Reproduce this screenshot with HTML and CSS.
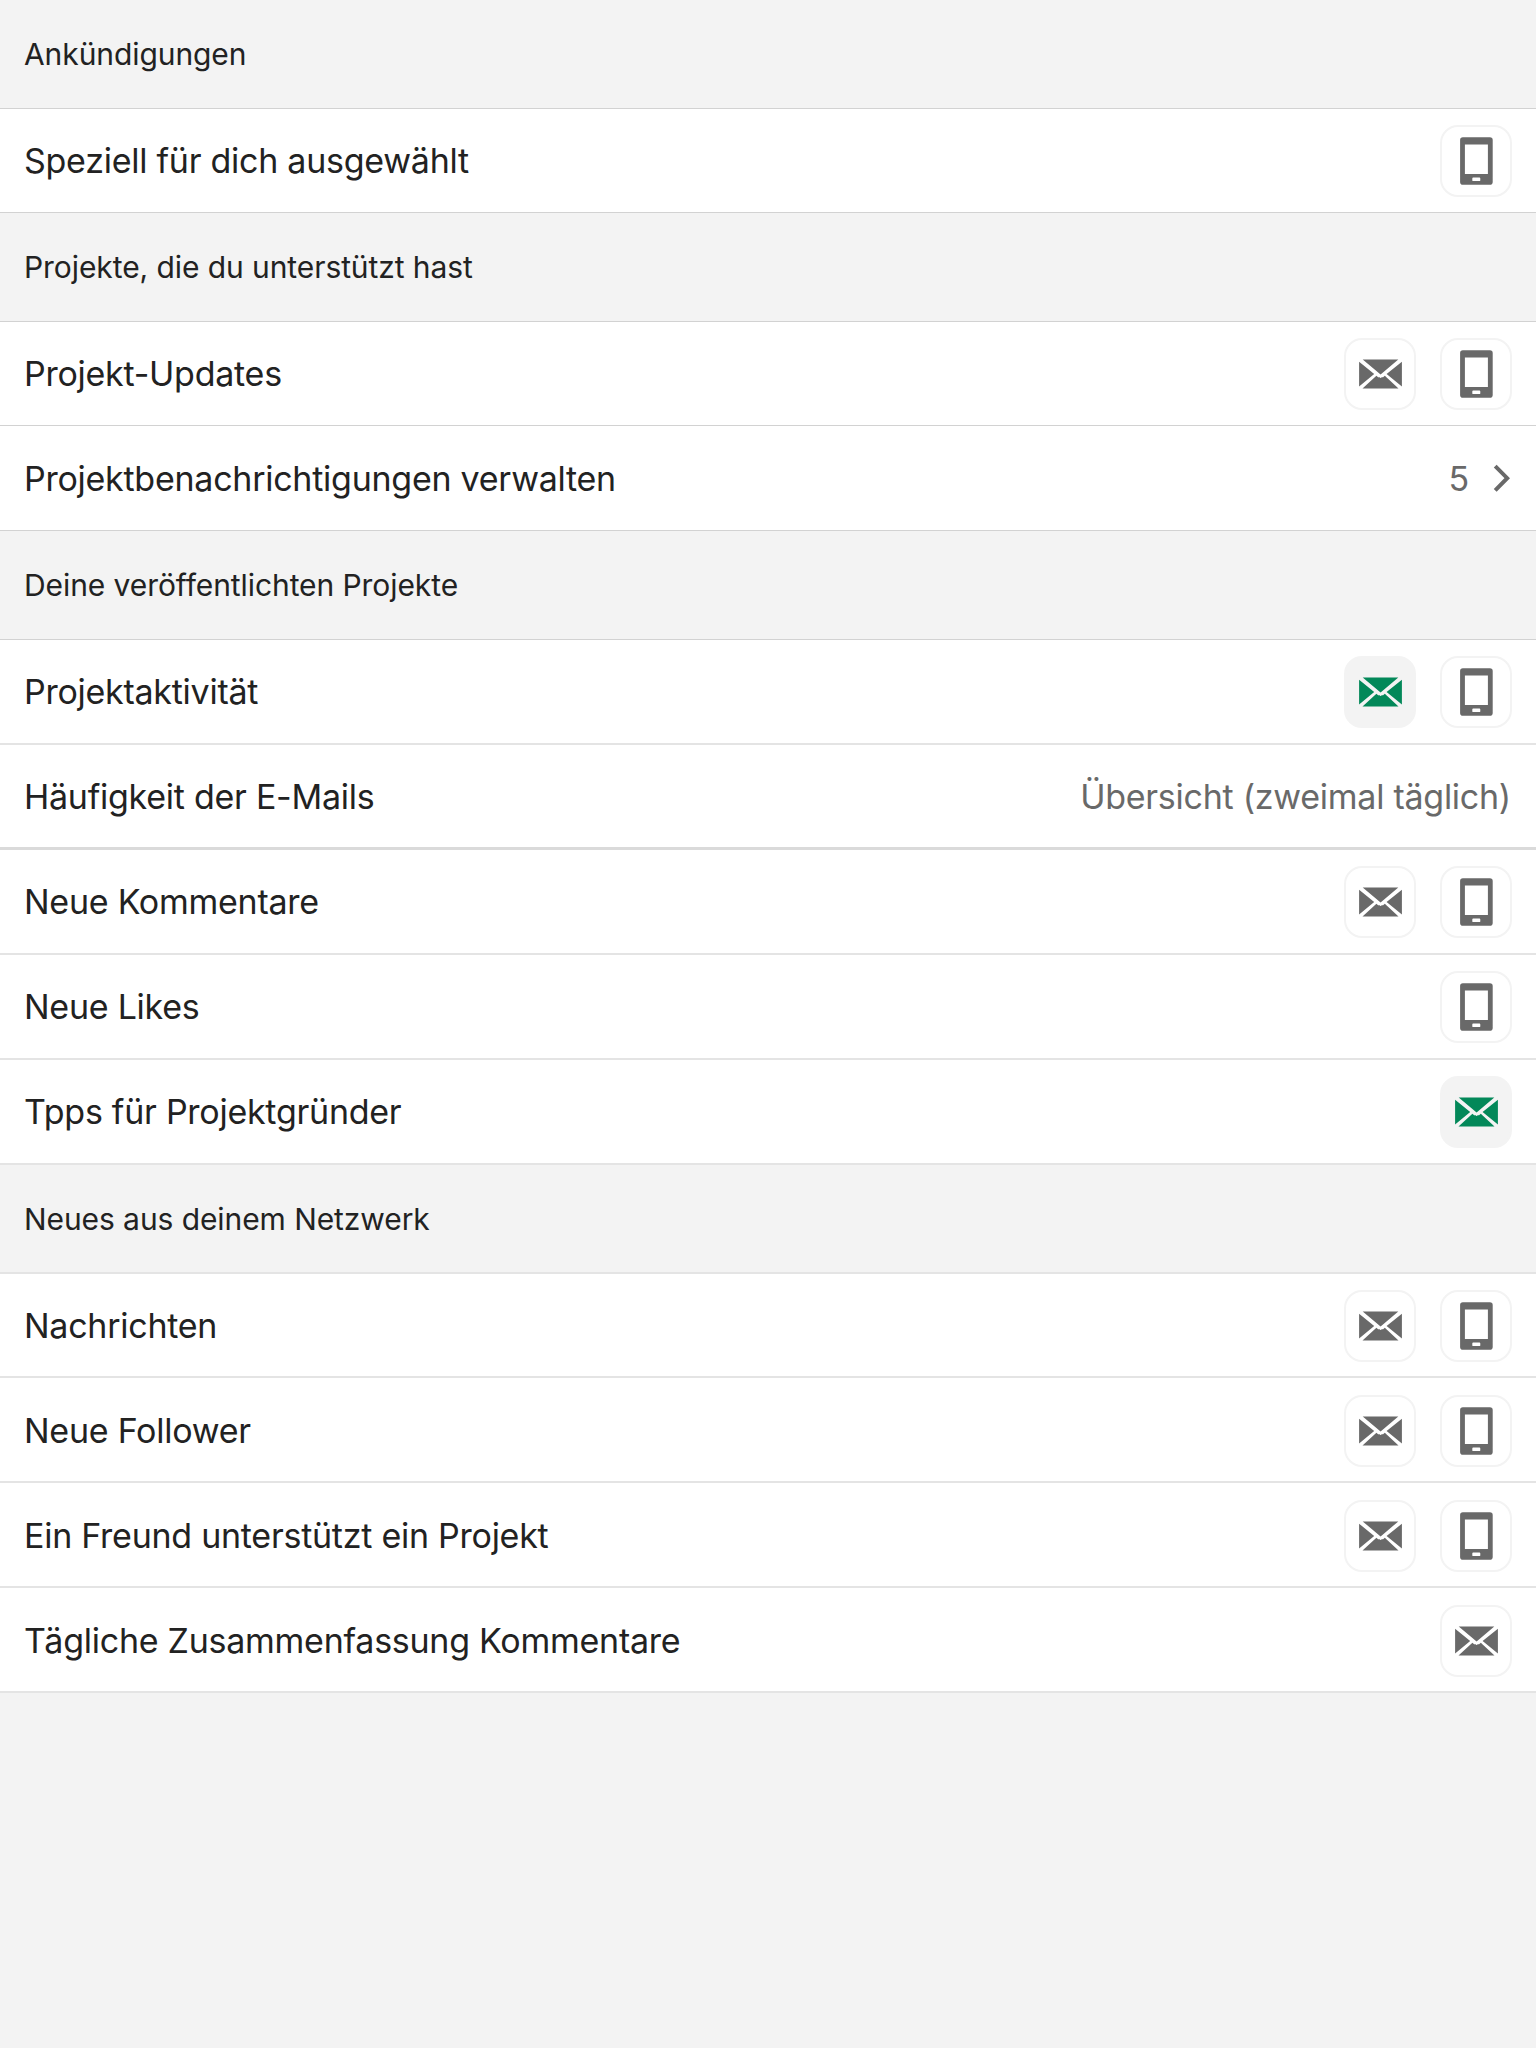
FILE: index.html
```html
<!DOCTYPE html>
<html lang="de">
<head>
<meta charset="utf-8">
<title>Benachrichtigungen</title>
<link rel="stylesheet" href="styles.css">
</head>
<body>
<svg class="sprite" aria-hidden="true">
  <symbol id="phone" viewBox="-.9 0 34 48"><path fill-rule="evenodd" d="M3 .3h27a2.8 2.8 0 0 1 2.8 2.8v41.8a2.8 2.8 0 0 1-2.8 2.8H3a2.8 2.8 0 0 1-2.8-2.8V3.1A2.8 2.8 0 0 1 3 .3zM5 7.4v29.6h23V7.4zM13.3 40.5h6.2q.9 0 .9.9v1.8q0 .9-.9.9h-6.2q-.9 0-.9-.9v-1.8q0-.9.9-.9z"/></symbol>
  <symbol id="mail" viewBox="-.7 -.2 44 30"><path d="M4 .2H39.6L21.9 15.3zM.4 2.5 15.5 14.7.4 27.2zM43.2 2.5V27.2L27.9 14.7zM17.7 16.5 19.7 18.2Q20.2 17.7 20.8 18.1 21.8 19.7 23 18.1 23.7 17.7 24.1 18.2L26.1 16.5 39.8 29.3H3.8z"/></symbol>
  <symbol id="chevron" viewBox="0 0 17 30"><path d="M2.2 2.2 14.2 14.2 2.2 26.4" fill="none" stroke="currentColor" stroke-width="4"/></symbol>
</svg>
<main class="settings">
  <h2 class="heading">Ankündigungen</h2>
  <div class="row row-short"><span>Speziell für dich ausgewählt</span><button class="toggle"><svg class="phone"><use href="#phone"/></svg></button></div>

  <h2 class="heading">Projekte, die du unterstützt hast</h2>
  <div class="row row-short"><span>Projekt-Updates</span><button class="toggle"><svg class="mail"><use href="#mail"/></svg></button><button class="toggle"><svg class="phone"><use href="#phone"/></svg></button></div>
  <div class="row"><span>Projektbenachrichtigungen verwalten</span><span class="value">5</span><svg class="chevron"><use href="#chevron"/></svg></div>

  <h2 class="heading">Deine veröffentlichten Projekte</h2>
  <div class="row soft raised"><span>Projektaktivität</span><button class="toggle on"><svg class="mail"><use href="#mail"/></svg></button><button class="toggle"><svg class="phone"><use href="#phone"/></svg></button></div>
  <div class="row group-end"><span>Häufigkeit der E-Mails</span><span class="value">Übersicht (zweimal täglich)</span></div>
  <div class="row soft raised"><span>Neue Kommentare</span><button class="toggle"><svg class="mail"><use href="#mail"/></svg></button><button class="toggle"><svg class="phone"><use href="#phone"/></svg></button></div>
  <div class="row soft raised"><span>Neue Likes</span><button class="toggle"><svg class="phone"><use href="#phone"/></svg></button></div>
  <div class="row soft raised"><span>Tpps für Projektgründer</span><button class="toggle on"><svg class="mail"><use href="#mail"/></svg></button></div>

  <h2 class="heading soft">Neues aus deinem Netzwerk</h2>
  <div class="row row-short soft"><span>Nachrichten</span><button class="toggle"><svg class="mail"><use href="#mail"/></svg></button><button class="toggle"><svg class="phone"><use href="#phone"/></svg></button></div>
  <div class="row soft"><span>Neue Follower</span><button class="toggle"><svg class="mail"><use href="#mail"/></svg></button><button class="toggle"><svg class="phone"><use href="#phone"/></svg></button></div>
  <div class="row soft"><span>Ein Freund unterstützt ein Projekt</span><button class="toggle"><svg class="mail"><use href="#mail"/></svg></button><button class="toggle"><svg class="phone"><use href="#phone"/></svg></button></div>
  <div class="row soft"><span>Tägliche Zusammenfassung Kommentare</span><button class="toggle"><svg class="mail"><use href="#mail"/></svg></button></div>
</main>
</body>
</html>
```
FILE: styles.css
```css
* { box-sizing: border-box; }
body { margin: 0; min-height: 2048px; background: #f3f3f3; color: #222; font-family: Inter, "Liberation Sans", sans-serif; }
.sprite { position: absolute; width: 0; height: 0; }
.heading, .row { display: flex; align-items: center; width: 100%; border-bottom: 1px solid #d2d2d2; }
.heading { height: 109px; margin: 0; padding: 0 24px; font-size: 30px; font-weight: 400; letter-spacing: -.08px; }
.row { height: 105px; padding: 1px 24px 0; background: #fff; font-size: 34px; letter-spacing: -.26px; }
.row-short { height: 104px; }
.row > span { padding-bottom: 1px; }
.row > span:first-child { margin-right: auto; }
.soft { border-bottom: 2px solid #e4e4e4; }
.row.soft { padding-top: 2px; }
.row.raised { padding-top: 1px; }
.row.group-end { padding-top: 2px; padding-right: 25px; border-bottom: 3px solid #dadada; }
.toggle { display: flex; align-items: center; justify-content: center; width: 72px; height: 72px; margin-left: 24px; padding: 0; border: 2px solid #f3f3f3; border-radius: 18px; background: #fff; color: #696969; }
.toggle.on { background: #f3f3f3; color: #038859; }
svg { fill: currentColor; }
.phone { width: 34px; height: 48px; }
.mail { width: 44px; height: 30px; }
.value { color: #696969; }
.chevron { width: 17px; height: 30px; margin: 0 2px 0 24px; color: #696969; }
```
